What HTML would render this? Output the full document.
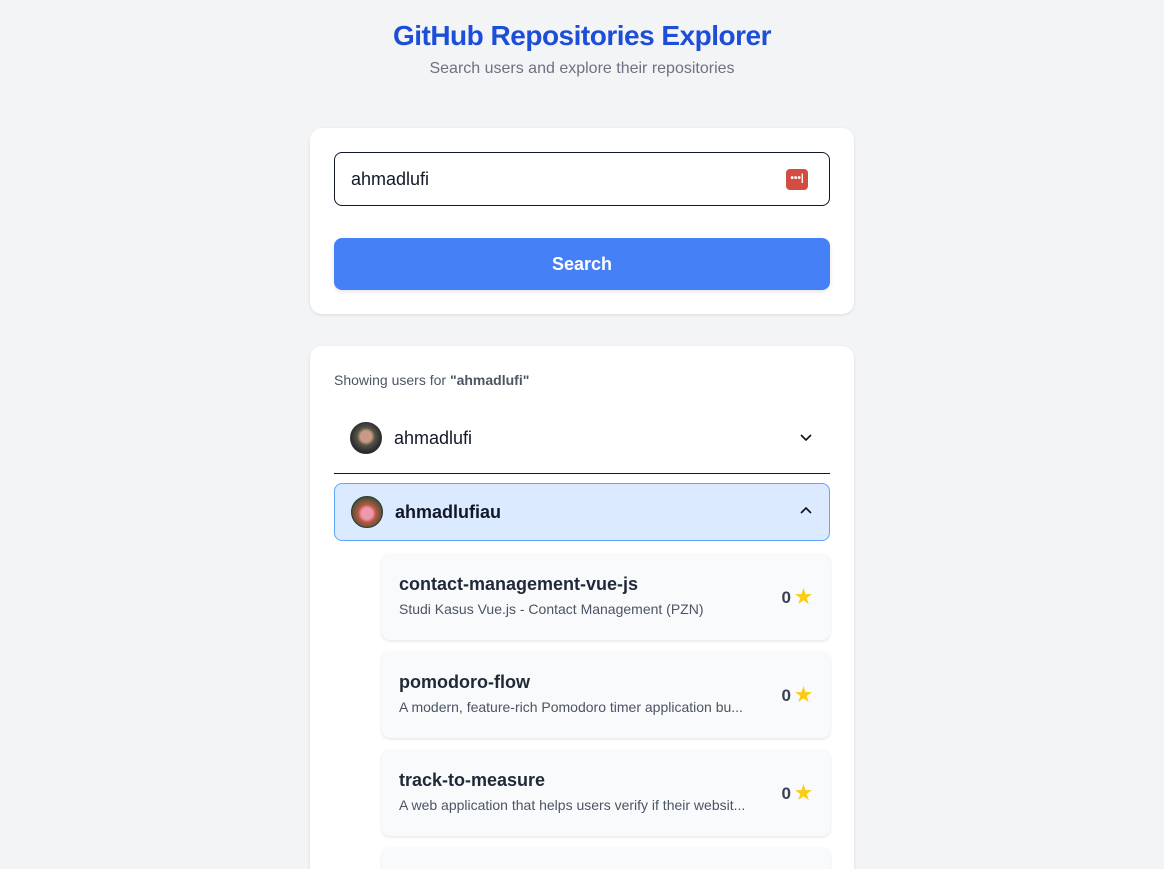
<!DOCTYPE html>
<html style="width:1164px;height:869px;overflow:hidden"><head><style>
*{box-sizing:border-box;margin:0;padding:0}
body{width:1164px;height:869px;overflow:hidden;background:#f3f4f6;font-family:"Liberation Sans",sans-serif;color:#111827;position:relative}
h1{position:absolute;top:20px;left:0;width:1164px;text-align:center;font-size:28px;font-weight:bold;color:#1d4ed8;letter-spacing:-0.5px}
.sub{position:absolute;top:60px;width:1164px;text-align:center;font-size:16px;color:#6b7280}
.card{position:absolute;left:310px;width:544px;background:#fff;border-radius:12px;box-shadow:0 1px 3px rgba(0,0,0,.1)}
.inp{position:absolute;left:24px;top:24px;width:496px;height:54px;border:1px solid #111827;border-radius:8px;font-size:18px;padding:16px 16px}
.pw{position:absolute;right:21px;top:16px;width:22px;height:21px;background:#d34c42;border-radius:4px;color:#fff;font-size:10px;line-height:19px;text-align:center;font-weight:bold}
.btn{position:absolute;left:24px;top:110px;width:496px;height:52px;background:#4580f7;border-radius:8px;color:#fff;font-size:18px;font-weight:bold;text-align:center;line-height:52px;box-shadow:0 2px 4px rgba(0,0,0,.1)}
.av{position:absolute;width:32px;height:32px;border-radius:50%;border:1px solid #333;background:radial-gradient(circle at 50% 45%,#c98 0 25%,#554 40%,#223 75%)}
.repo{position:absolute;left:72px;width:448px;height:86px;background:#f9fafb;border-radius:8px;box-shadow:0 1px 3px rgba(0,0,0,.12)}
.repo b{position:absolute;left:17px;top:20px;font-size:18px;color:#1f2937}
.repo span{position:absolute;left:17px;top:47px;font-size:14px;color:#4b5563}
.repo i{position:absolute;right:18px;top:32px;font-style:normal;font-weight:bold;font-size:17px;color:#374151}
.repo i em{color:#facc15;font-style:normal;font-size:19px;margin-left:4px}
</style></head><body>
<h1>GitHub Repositories Explorer</h1>
<div class="sub">Search users and explore their repositories</div>
<div class="card" style="top:128px;height:186px">
<div class="inp">ahmadlufi<div class="pw">•••|</div></div>
<div class="btn">Search</div>
</div>
<div class="card" style="top:346px;height:540px;overflow:hidden">
<div style="position:absolute;left:24px;top:26px;font-size:14px;color:#4b5563">Showing users for <b>"ahmadlufi"</b></div>
<div class="av" style="left:40px;top:76px"></div>
<div style="position:absolute;left:84px;top:82px;font-size:18px">ahmadlufi</div>
<svg style="position:absolute;left:490px;top:86px" width="12" height="10"><path d="M1 3l5 5 5-5" stroke="#111" stroke-width="1.6" fill="none"/></svg>
<div style="position:absolute;left:24px;top:127px;width:496px;height:1px;background:#111827"></div>
<div style="position:absolute;left:24px;top:137px;width:496px;height:58px;background:#dbeafe;border:1px solid #60a5fa;border-radius:8px"></div>
<div class="av" style="left:41px;top:150px;background:radial-gradient(circle at 50% 55%,#e9a 0 25%,#b54 40%,#353 75%)"></div>
<div style="position:absolute;left:85px;top:156px;font-size:18px;font-weight:bold">ahmadlufiau</div>
<svg style="position:absolute;left:490px;top:160px" width="12" height="10"><path d="M1 7l5-5 5 5" stroke="#111" stroke-width="1.6" fill="none"/></svg>
<div class="repo" style="top:208px"><b>contact-management-vue-js</b><span>Studi Kasus Vue.js - Contact Management (PZN)</span><i>0<em>★</em></i></div>
<div class="repo" style="top:306px"><b>pomodoro-flow</b><span>A modern, feature-rich Pomodoro timer application bu...</span><i>0<em>★</em></i></div>
<div class="repo" style="top:404px"><b>track-to-measure</b><span>A web application that helps users verify if their websit...</span><i>0<em>★</em></i></div>
<div class="repo" style="top:502px"></div>
</div>
</body></html>
